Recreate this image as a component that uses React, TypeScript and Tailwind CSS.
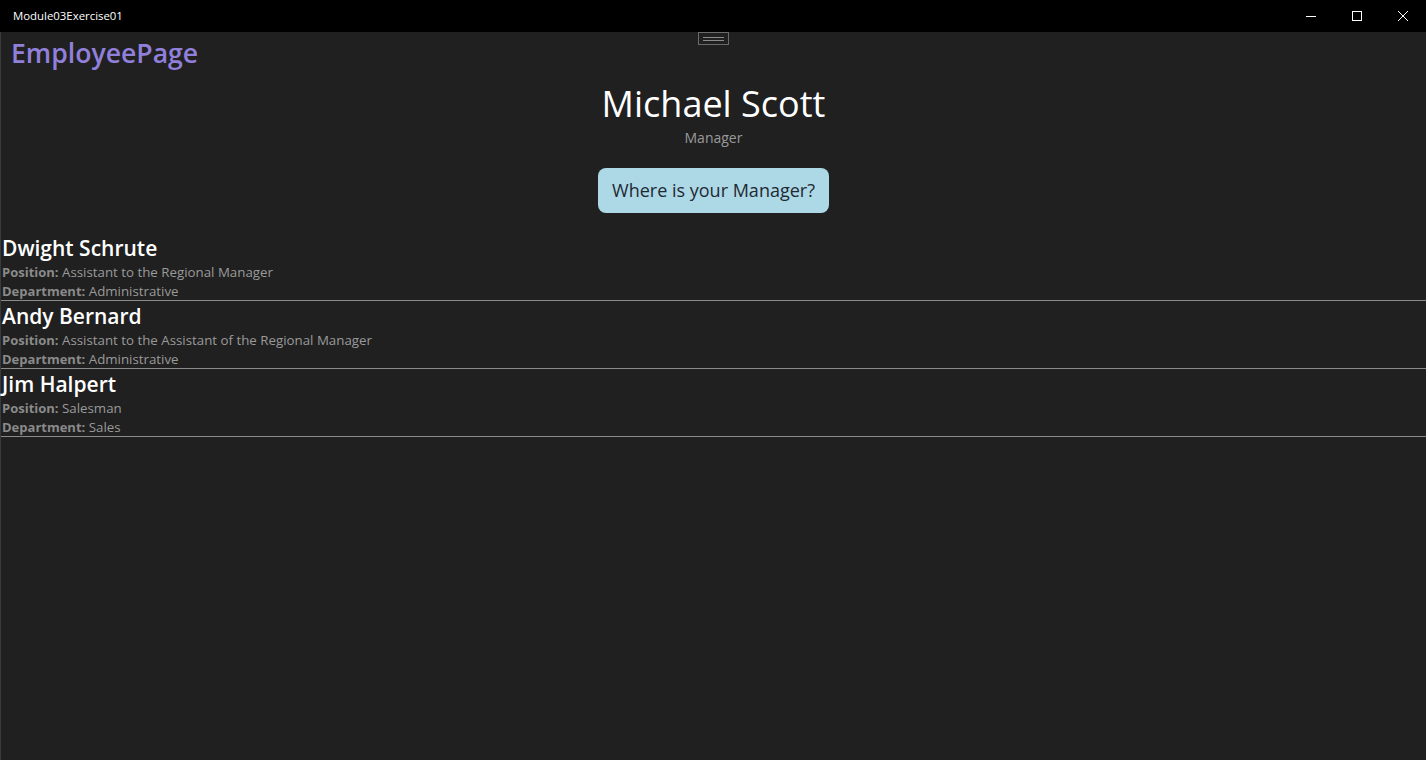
import React from "react";

const employees = [
  { name: "Dwight Schrute", position: "Assistant to the Regional Manager", department: "Administrative" },
  { name: "Andy Bernard", position: "Assistant to the Assistant of the Regional Manager", department: "Administrative" },
  { name: "Jim Halpert", position: "Salesman", department: "Sales" },
];

export default function App() {
  return (
    <div className="w-[1426px] h-[760px] bg-[#202020] flex flex-col overflow-hidden" style={{ fontFamily: '"Open Sans", "Noto Sans", sans-serif' }}>
      {/* Title bar */}
      <div className="h-[32px] bg-black flex items-center shrink-0">
        <div className="pl-[13px] text-[11.4px] text-white flex-1" style={{ fontFamily: '"Open Sans", "Noto Sans", sans-serif' }}>Module03Exercise01</div>
        <div className="flex h-full">
          <div className="w-[46px] h-full flex items-center justify-center">
            <svg width="10" height="10" viewBox="0 0 10 10"><path d="M0 5.5h10" stroke="white" strokeWidth="1" /></svg>
          </div>
          <div className="w-[46px] h-full flex items-center justify-center">
            <svg width="10" height="10" viewBox="0 0 10 10"><rect x="0.5" y="0.5" width="9" height="9" fill="none" stroke="white" strokeWidth="1" /></svg>
          </div>
          <div className="w-[46px] h-full flex items-center justify-center">
            <svg width="10" height="10" viewBox="0 0 10 10"><path d="M0 0L10 10M10 0L0 10" stroke="white" strokeWidth="1" /></svg>
          </div>
        </div>
      </div>

      {/* Content */}
      <div className="relative flex-1 flex flex-col border-l border-[#3a3a3a]">
        <div className="absolute left-[697px] top-0 w-[31px] h-[13px] border border-[#6a6a6a] flex flex-col items-center justify-center gap-[2px]">
          <div className="w-[21px] h-px bg-[#8a8a8a]" />
          <div className="w-[21px] h-px bg-[#8a8a8a]" />
        </div>
        <div className="mt-[3px] pl-[10px] text-[26.6px] leading-[36px] font-semibold text-[#9180db]">EmployeePage</div>
        <div className="mt-[9px] flex flex-col items-center">
          <div className="text-[36px] leading-[48px] text-white">Michael Scott</div>
          <div className="text-[14px] leading-[20px] text-[#9a9a9a]">Manager</div>
          <button className="mt-[20px] bg-[#add8e6] rounded-[8px] px-[14px] py-[10px] text-[18px] leading-[25px] text-[#1e2a33]">Where is your Manager?</button>
        </div>
        <div className="mt-[20px] flex flex-col">
          {employees.map((e) => (
            <div key={e.name} className="pl-[1px] border-b border-[#8a8a8a]">
              <div className="text-[21px] leading-[30px] font-semibold text-white">{e.name}</div>
              <div className="text-[13.3px] leading-[19px] text-[#9a9a9a]">
                <span className="text-[13px] font-bold text-[#8a8a8a]">Position:</span> {e.position}
              </div>
              <div className="text-[13.3px] leading-[18px] text-[#9a9a9a]">
                <span className="text-[13px] font-bold text-[#8a8a8a]">Department:</span> {e.department}
              </div>
            </div>
          ))}
        </div>
      </div>
    </div>
  );
}
